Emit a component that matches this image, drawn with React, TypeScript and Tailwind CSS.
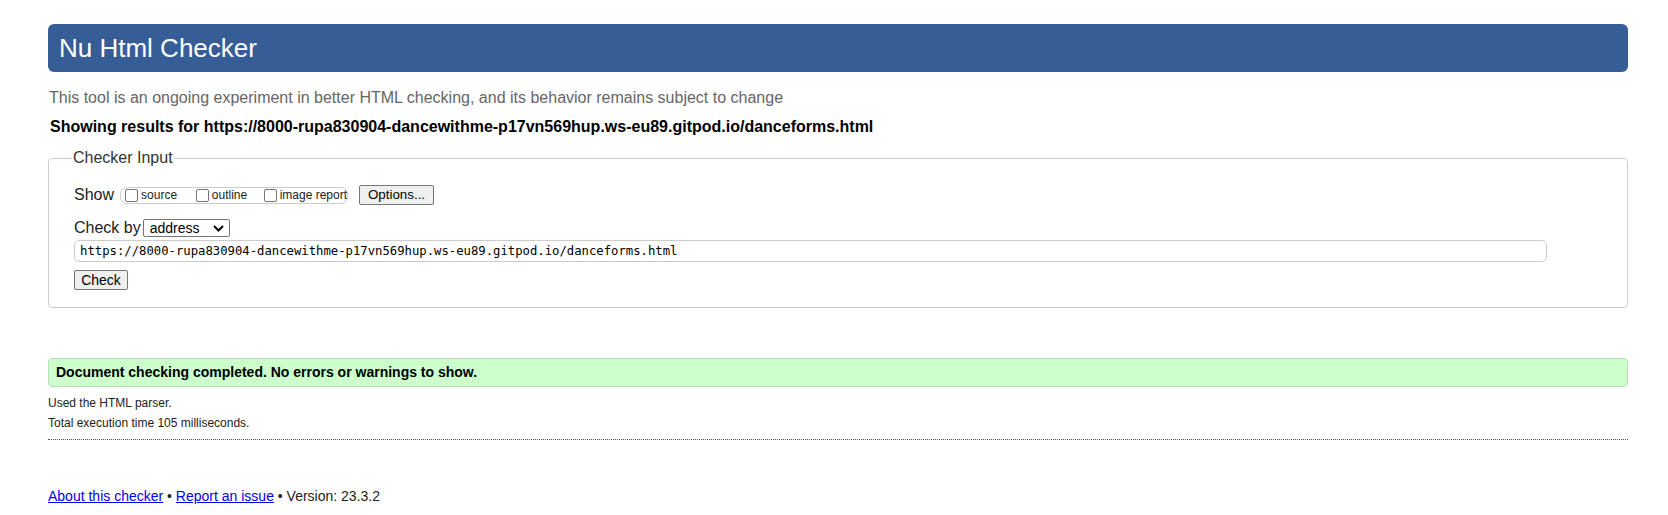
const URL_TESTADA =
  "https://8000-rupa830904-dancewithme-p17vn569hup.ws-eu89.gitpod.io/danceforms.html";

const BOTAO =
  "rounded-[2px] border border-[#767676] bg-[#efefef] text-[13.33px] leading-[16px] text-black";

function Caixa({ rotulo, largura }: { rotulo: string; largura: string }) {
  return (
    <label className={`flex items-center whitespace-nowrap ${largura}`}>
      <span className="mr-[3px] ml-[4px] inline-block h-[13px] w-[13px] shrink-0 rounded-[2px] border border-[#767676] bg-white" />
      <span className="text-[12px] leading-[14px]">{rotulo}</span>
    </label>
  );
}

export default function App() {
  return (
    <div className="min-h-[515px] bg-white pt-[24px] pr-[40px] pl-[48px] font-['Liberation_Sans',Arial,sans-serif] text-[#222]">
      <h1 className="flex h-[48px] items-center rounded-[6px] bg-[#365d96] pl-[11px] text-[26px] text-white">
        Nu Html Checker
      </h1>
      <p className="mt-[17px] pl-[1px] text-[16px] leading-[18px] text-[#666]">
        This tool is an ongoing experiment in better HTML checking, and its
        behavior remains subject to change
      </p>
      <p className="mt-[11px] pl-[2px] text-[16px] font-bold leading-[18px] text-black">
        Showing results for {URL_TESTADA}
      </p>

      <fieldset className="mt-[13px] rounded-[4px] border border-[#ccc] pr-[24px] pb-[15px] pl-[25px]">
        <legend className="-ml-[2px] px-px text-[16px] leading-[18px] text-[#333]">
          Checker Input
        </legend>

        <div className="mt-[18px] flex h-[20px] items-center text-[16px]">
          <span>Show</span>
          <div className="ml-[6px] flex h-[17px] w-[228px] items-center rounded-[7px] border border-[#ccc]">
            <Caixa rotulo="source" largura="w-[71px]" />
            <Caixa rotulo="outline" largura="w-[68px]" />
            <Caixa rotulo="image report" largura="flex-1" />
          </div>
          <button className={`${BOTAO} ml-[11px] h-[20px] w-[75px]`}>
            Options...
          </button>
        </div>

        <div className="mt-[14px] flex h-[18px] items-center text-[16px]">
          <span>Check by</span>
          <div className="ml-[2px] flex h-[18px] w-[87px] items-center justify-between rounded-[2px] border border-[#767676] pr-[5px] pl-[6px] text-[14px] text-black">
            <span>address</span>
            <svg width="11" height="7" viewBox="0 0 11 7">
              <path
                d="M1 1l4.5 4.5L10 1"
                fill="none"
                stroke="#000"
                strokeWidth="2"
              />
            </svg>
          </div>
        </div>

        <div className="mt-[3px] flex h-[22px] w-[1473px] items-center rounded-[5px] border border-[#ccc] pl-[5px] font-['DejaVu_Sans_Mono',monospace] text-[12.25px] text-black">
          {URL_TESTADA}
        </div>

        <button className={`${BOTAO} mt-[8px] h-[20px] w-[54px] text-[14px]`}>
          Check
        </button>
      </fieldset>

      <div className="mt-[50px] flex h-[29px] items-center rounded-[4px] border border-[#bbd9bb] bg-[#ccffcc] pl-[7px] text-[14px] font-bold text-black">
        Document checking completed. No errors or warnings to show.
      </div>
      <p className="mt-[8px] text-[12px] leading-[16px]">Used the HTML parser.</p>
      <p className="mt-[4px] text-[12px] leading-[16px]">
        Total execution time 105 milliseconds.
      </p>
      <div className="mt-[8px] border-t border-dotted border-[#555]" />

      <p className="mt-[48px] text-[14px] leading-[17px]">
        <a href="#" className="text-[#0000ee] underline">
          About this checker
        </a>
        {" • "}
        <a href="#" className="text-[#0000ee] underline">
          Report an issue
        </a>
        {" • Version: 23.3.2"}
      </p>
    </div>
  );
}
